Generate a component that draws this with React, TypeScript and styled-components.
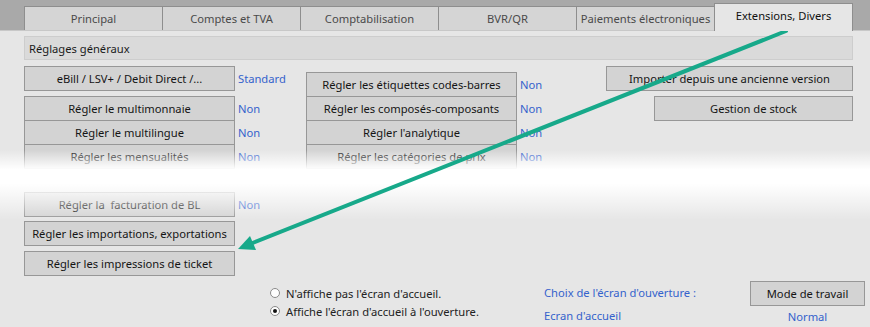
import React from "react";
import styled, { createGlobalStyle, css } from "styled-components";

const Global = createGlobalStyle`
  html, body { margin: 0; padding: 0; background: #e6e6e6; }
  body { font-family: "Noto Sans", "Open Sans", sans-serif; font-size: 11px; color: #1a1a1a; }
  * { box-sizing: border-box; }
`;

const Page = styled.div`
  position: relative;
  width: 870px;
  height: 327px;
  overflow: hidden;
  background: #e6e6e6;
`;

const TabStrip = styled.div`
  display: flex;
  align-items: flex-end;
  height: 31px;
  padding-left: 24px;
  background: #a9a9a9;
  border-bottom: 1px solid #c8c8c8;
`;

const Tab = styled.div<{ $active?: boolean }>`
  width: 139px;
  height: 24px;
  margin-right: -1px;
  display: flex;
  align-items: center;
  justify-content: center;
  background: #d5d5d5;
  border: 1px solid #8e8e8e;
  border-bottom: none;
  color: #4a4a4a;
  font-size: 11.2px;
  white-space: nowrap;
  ${(p) =>
    p.$active &&
    css`
      height: 28px;
      margin-bottom: -1px;
      background: #e6e6e6;
      color: #111;
      position: relative;
      z-index: 1;
      padding-bottom: 4px;
    `}
`;

const SectionHeader = styled.div`
  margin: 5px 17px 0 24px;
  height: 24px;
  display: flex;
  align-items: center;
  padding-left: 4px;
  background: #dadada;
  border: 1px solid #cdcdcd;
  color: #1a1a1a;
  font-size: 11.2px;
`;

const Body = styled.div`
  display: flex;
  padding-left: 24px;
  margin-top: 6px;
`;

const Column = styled.div<{ $width: number; $top?: number }>`
  flex: none;
  display: flex;
  flex-direction: column;
  width: ${(p) => p.$width}px;
  margin-top: ${(p) => p.$top ?? 0}px;
`;

const Stack = styled.div<{ $gap?: number }>`
  display: flex;
  flex-direction: column;
  margin-top: ${(p) => p.$gap ?? 0}px;
  && > * + * { margin-top: -1px; }
`;

const Row = styled.div<{ $gap?: number }>`
  display: flex;
  align-items: center;
  ${(p) =>
    p.$gap !== undefined &&
    css`
      margin-top: ${p.$gap}px;
    `}
`;

const Button = styled.div<{ $width?: number }>`
  width: ${(p) => p.$width ?? 211}px;
  height: 25px;
  flex: none;
  display: flex;
  align-items: center;
  justify-content: center;
  background: #d3d3d3;
  border: 1px solid #979797;
  color: #151515;
  font-size: 11.2px;
  white-space: nowrap;
`;

const Spacer = styled.div`
  height: 25px;
`;

const Value = styled.span`
  margin-left: 3px;
  color: #3462cc;
  font-size: 11.2px;
  white-space: nowrap;
`;

const RightColumn = styled.div`
  flex: none;
  display: flex;
  flex-direction: column;
  align-items: flex-end;
  width: 300px;
  && > * + * { margin-top: 5px; }
`;

const BottomRow = styled.div`
  display: flex;
  margin-top: 5px;
  padding-left: 270px;
`;

const RadioGroup = styled.div`
  flex: none;
  display: flex;
  flex-direction: column;
  width: 274px;
  padding-top: 3px;
`;

const RadioLine = styled.label`
  display: flex;
  align-items: center;
  height: 18px;
  color: #222;
  font-size: 11.2px;
`;

const RadioCircle = styled.span<{ $checked?: boolean }>`
  width: 10px;
  height: 10px;
  margin-right: 6px;
  border-radius: 50%;
  border: 1px solid #8a8a8a;
  background: #fdfdfd;
  display: flex;
  align-items: center;
  justify-content: center;
  &::after {
    content: "";
    width: 4px;
    height: 4px;
    border-radius: 50%;
    background: ${(p) => (p.$checked ? "#111" : "transparent")};
  }
`;

const InfoGroup = styled.div`
  flex: none;
  display: flex;
  flex-direction: column;
  width: 206px;
  padding-top: 3px;
  color: #3462cc;
  font-size: 11.2px;
  & > span { height: 18px; line-height: 18px; }
  & > span + span { margin-top: 5px; }
`;

const ModeGroup = styled.div`
  flex: none;
  display: flex;
  flex-direction: column;
  align-items: center;
  width: 115px;
`;

const ModeValue = styled.span`
  margin-top: 3px;
  color: #3462cc;
  font-size: 11.2px;
`;

const Fade = styled.div`
  position: absolute;
  left: 0;
  right: 0;
  top: 150px;
  height: 70px;
  pointer-events: none;
  background: linear-gradient(
    to bottom,
    rgba(255, 255, 255, 0) 0%,
    rgba(255, 255, 255, 1) 28%,
    rgba(255, 255, 255, 1) 48%,
    rgba(255, 255, 255, 0) 100%
  );
`;

const ArrowLayer = styled.svg`
  position: absolute;
  left: 0;
  top: 0;
  pointer-events: none;
`;

const tabs = [
  "Principal",
  "Comptes et TVA",
  "Comptabilisation",
  "BVR/QR",
  "Paiements électroniques",
  "Extensions, Divers",
];

export default function App() {
  return (
    <Page>
      <Global />
      <TabStrip>
        {tabs.map((t, i) => (
          <Tab key={t} $active={i === tabs.length - 1}>
            {t}
          </Tab>
        ))}
      </TabStrip>
      <SectionHeader>Réglages généraux</SectionHeader>
      <Body>
        <Column $width={282}>
          <Row>
            <Button>eBill / LSV+ / Debit Direct /...</Button>
            <Value>Standard</Value>
          </Row>
          <Stack $gap={5}>
            <Row>
              <Button>Régler le multimonnaie</Button>
              <Value>Non</Value>
            </Row>
            <Row>
              <Button>Régler le multilingue</Button>
              <Value>Non</Value>
            </Row>
            <Row>
              <Button>Régler les mensualités</Button>
              <Value>Non</Value>
            </Row>
            <Spacer />
            <Row>
              <Button>Régler la&nbsp; facturation de BL</Button>
              <Value>Non</Value>
            </Row>
          </Stack>
          <Row $gap={4}>
            <Button>Régler les importations, exportations</Button>
          </Row>
          <Row $gap={5}>
            <Button>Régler les impressions de ticket</Button>
          </Row>
        </Column>
        <Column $width={247} $top={6}>
          <Stack>
            <Row>
              <Button>Régler les étiquettes codes-barres</Button>
              <Value>Non</Value>
            </Row>
            <Row>
              <Button>Régler les composés-composants</Button>
              <Value>Non</Value>
            </Row>
            <Row>
              <Button>Régler l'analytique</Button>
              <Value>Non</Value>
            </Row>
            <Row>
              <Button>Régler les catégories de prix</Button>
              <Value>Non</Value>
            </Row>
          </Stack>
        </Column>
        <RightColumn>
          <Button $width={247}>Importer depuis une ancienne version</Button>
          <Button $width={199}>Gestion de stock</Button>
        </RightColumn>
      </Body>
      <BottomRow>
        <RadioGroup>
          <RadioLine>
            <RadioCircle />
            N'affiche pas l'écran d'accueil.
          </RadioLine>
          <RadioLine>
            <RadioCircle $checked />
            Affiche l'écran d'accueil à l'ouverture.
          </RadioLine>
        </RadioGroup>
        <InfoGroup>
          <span>Choix de l'écran d'ouverture :</span>
          <span>Ecran d'accueil</span>
        </InfoGroup>
        <ModeGroup>
          <Button $width={115}>Mode de travail</Button>
          <ModeValue>Normal</ModeValue>
        </ModeGroup>
      </BottomRow>
      <Fade />
      <ArrowLayer width="870" height="327" viewBox="0 0 870 327">
        <line
          x1="786"
          y1="31"
          x2="250"
          y2="244"
          stroke="#17a98a"
          strokeWidth="4"
          strokeLinecap="round"
        />
        <polygon points="238,249 256,250 250,236" fill="#17a98a" />
      </ArrowLayer>
    </Page>
  );
}
